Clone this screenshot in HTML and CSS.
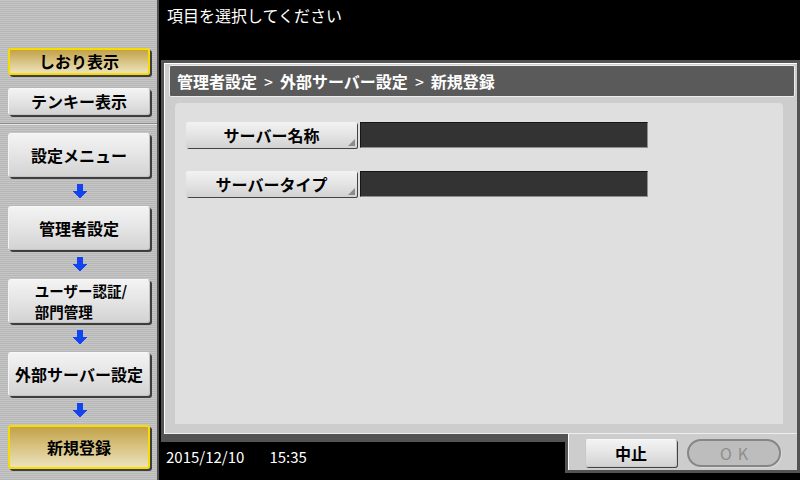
FILE: index.html
```html
<!DOCTYPE html>
<html lang="ja">
<head>
  <meta charset="UTF-8" />
  <title>外部サーバー設定 - 新規登録</title>
  <link rel="stylesheet" href="styles.css">
</head>
<body>
  <div class="screen">
    <aside class="sidebar">
      <div class="quick">
        <div class="nav-btn small active">しおり表示</div>
        <div class="nav-btn small">テンキー表示</div>
      </div>
      <div class="crumbs">
        <div class="nav-btn">設定メニュー</div>
        <div class="arrow"><svg width="14" height="15" viewBox="0 0 14 15"><polygon points="4,0 10,0 10,7 14,7 7,15 0,7 4,7" /></svg></div>
        <div class="nav-btn">管理者設定</div>
        <div class="arrow"><svg width="14" height="15" viewBox="0 0 14 15"><polygon points="4,0 10,0 10,7 14,7 7,15 0,7 4,7" /></svg></div>
        <div class="nav-btn multi"><span>ユーザー認証/<br>部門管理</span></div>
        <div class="arrow"><svg width="14" height="15" viewBox="0 0 14 15"><polygon points="4,0 10,0 10,7 14,7 7,15 0,7 4,7" /></svg></div>
        <div class="nav-btn">外部サーバー設定</div>
        <div class="arrow"><svg width="14" height="15" viewBox="0 0 14 15"><polygon points="4,0 10,0 10,7 14,7 7,15 0,7 4,7" /></svg></div>
        <div class="nav-btn active">新規登録</div>
      </div>
    </aside>

    <main class="main">
      <div class="prompt">項目を選択してください</div>

      <section class="panel">
        <div class="panel-head">管理者設定<span class="sep">&gt;</span>外部サーバー設定<span class="sep">&gt;</span>新規登録</div>
        <div class="panel-body">
          <div class="row">
            <div class="field-btn">サーバー名称</div>
            <div class="field"></div>
          </div>
          <div class="row">
            <div class="field-btn">サーバータイプ</div>
            <div class="field"></div>
          </div>
        </div>
      </section>

      <footer class="status">
        <div class="clock"><span>2015/12/10</span><span>15:35</span></div>
        <div class="actions">
          <div class="btn">中止</div>
          <div class="btn ok">OK</div>
        </div>
      </footer>
    </main>
  </div>
</body>
</html>
```

FILE: styles.css
```css
body {
  margin: 0;
  background: #000;
  font-family: "Noto Sans CJK JP", "Noto Sans", sans-serif;
  color: #000;
}

.screen {
  display: flex;
  width: 800px;
  height: 480px;
  overflow: hidden;
}

/* left column */
.sidebar {
  width: 157px;
  flex: none;
  border-right: 2px solid #505050;
  background: repeating-linear-gradient(to bottom, #c6c6c6 0 1px, #b7b7b7 1px 2px);
  display: flex;
  flex-direction: column;
  padding-top: 48px;
}

.quick {
  display: flex;
  flex-direction: column;
  gap: 13px;
  padding-bottom: 8px;
  border-bottom: 1px solid #8a8a8a;
  box-shadow: 0 1px 0 #e6e6e6;
}

.crumbs {
  display: flex;
  flex-direction: column;
  padding-top: 9px;
}

.nav-btn {
  margin-left: 8px;
  width: 142px;
  height: 44px;
  box-sizing: border-box;
  border: 1px solid #c4c4c4;
  border-top-color: #f8f8f8;
  border-left-color: #f4f4f4;
  border-radius: 3px;
  background: linear-gradient(#f3f3f3, #e6e6e6 45%, #d3d3d3);
  box-shadow: 2px 2px 0 #3e3e3e;
  display: flex;
  align-items: center;
  justify-content: center;
  font-size: 16px;
  font-weight: 700;
  line-height: 17px;
  white-space: nowrap;
}

.nav-btn.small {
  height: 27px;
}

.nav-btn.multi span {
  text-align: left;
  font-size: 14.5px;
  line-height: 21px;
  padding-left: 4px;
}

.nav-btn.active {
  border: 2px solid #f6dc00;
  background: linear-gradient(#c2a24a, #d6c07c 45%, #ece2bc);
}

.arrow {
  height: 29px;
  display: flex;
  align-items: center;
  justify-content: center;
  padding-left: 2px;
}

.arrow svg {
  fill: #1244f0;
  shape-rendering: crispEdges;
}

/* right area */
.main {
  flex: 1;
  display: flex;
  flex-direction: column;
  padding-left: 2px;
}

.prompt {
  height: 60px;
  box-sizing: border-box;
  padding: 6px 0 0 6px;
  color: #fff;
  font-size: 16px;
  line-height: 18px;
}

.panel {
  height: 382px;
  box-sizing: border-box;
  border: 3px solid #535353;
  border-bottom-width: 8px;
  background: #cdcdcd;
  box-shadow: inset 1px 1px 0 #fff, inset 0 -1px 0 #eee;
  padding: 2px 2px 0 5px;
  display: flex;
  flex-direction: column;
}

.panel-head {
  height: 32px;
  box-sizing: border-box;
  border: 1px solid #ececec;
  border-radius: 2px;
  background: #5a5a5a;
  color: #fff;
  font-size: 16px;
  font-weight: 700;
  line-height: 30px;
  padding-left: 7px;
}

.sep {
  display: inline-block;
  width: 23px;
  text-align: center;
  font-weight: 400;
}

.panel-body {
  margin: 6px 12px 10px 6px;
  flex: 1;
  background: #dfdfdf;
  border-radius: 4px 4px 0 0;
  padding: 19px 0 0 11px;
  display: flex;
  flex-direction: column;
  gap: 22px;
}

.row {
  display: flex;
  gap: 3px;
  height: 27px;
}

.field-btn {
  position: relative;
  width: 171px;
  height: 26px;
  box-sizing: border-box;
  border-radius: 2px;
  background: linear-gradient(#f2f2f2, #e4e4e4 50%, #d2d2d2);
  box-shadow: 1px 1px 0 #444;
  display: flex;
  align-items: center;
  justify-content: center;
  font-size: 16px;
  font-weight: 700;
}

.field-btn::after {
  content: "";
  position: absolute;
  right: 2px;
  bottom: 2px;
  border-style: solid;
  border-width: 0 0 7px 7px;
  border-color: transparent transparent #8c8c8c transparent;
}

.field {
  width: 288px;
  height: 26px;
  box-sizing: border-box;
  background: #333;
  border: 1px solid;
  border-color: #151515 #8e8e8e #8e8e8e #151515;
}

.status {
  flex: 1;
  display: flex;
  align-items: flex-start;
}

.clock {
  margin: 7px 0 0 5px;
  color: #fff;
  font-size: 15px;
  line-height: 16px;
  display: flex;
  gap: 25px;
}

.actions {
  margin: -8px 0 0 auto;
  width: 235px;
  height: 39px;
  box-sizing: border-box;
  border: 3px solid #535353;
  border-top: none;
  background: #cdcdcd;
  box-shadow: inset 1px 0 0 #fff;
  padding: 5px 0 0 17px;
  display: flex;
  gap: 10px;
}

.btn {
  width: 92px;
  height: 28px;
  box-sizing: border-box;
  border: 1px solid #c8c8c8;
  border-top-color: #f8f8f8;
  border-radius: 3px;
  background: linear-gradient(#f3f3f3, #e6e6e6 45%, #d3d3d3);
  box-shadow: 1px 1px 0 #444;
  display: flex;
  align-items: center;
  justify-content: center;
  font-size: 16px;
  font-weight: 700;
}

.btn.ok {
  width: 94px;
  border: 2px solid #868686;
  border-radius: 15px;
  background: #bdbdbd;
  box-shadow: 1px 1px 0 #d8d8d8;
  color: #8e8e8e;
  font-weight: 400;
  letter-spacing: 6px;
  padding-left: 6px;
}
```
